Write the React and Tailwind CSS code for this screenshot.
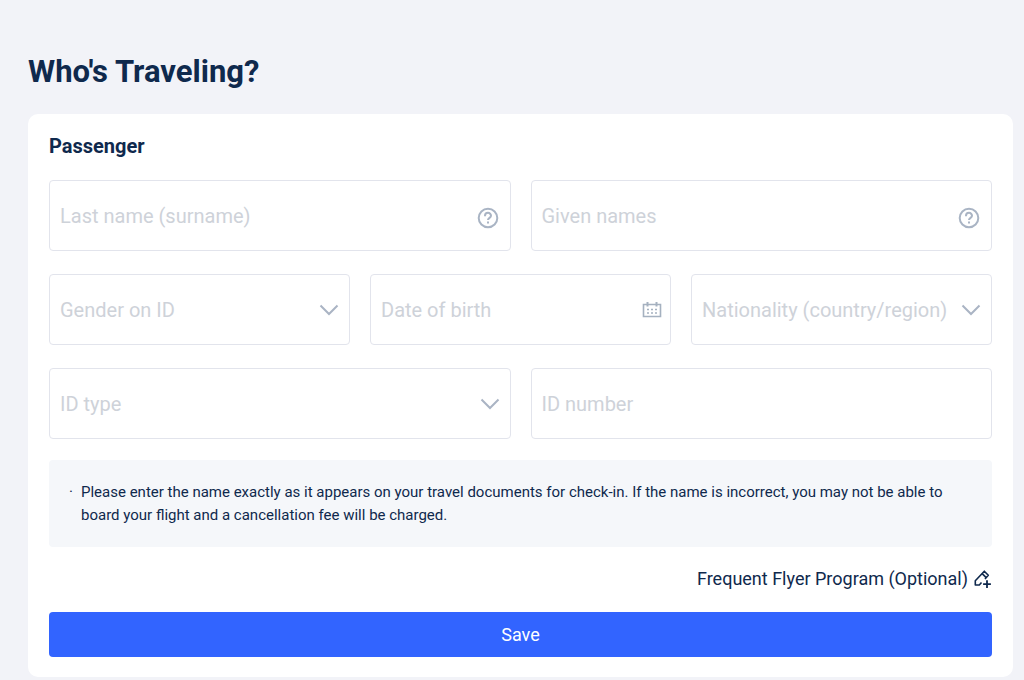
import { useState } from 'react';

function HelpIcon() {
  return (
    <svg viewBox="0 0 22 22" className="size-[22px]" fill="none" stroke="currentColor" strokeWidth="2" aria-hidden="true">
      <circle cx="11" cy="11" r="9.3" />
      <path d="M8 9.200V8.800a3 3 0 0 1 6 0c0 2-3 2.100-3 4.200" />
      <path d="M11 14.600v2" />
    </svg>
  );
}

function ChevronIcon() {
  return (
    <svg viewBox="0 0 20 12" className="h-3 w-5 shrink-0 pointer-events-none" fill="none" stroke="#aab4c4" strokeWidth="2" aria-hidden="true">
      <path d="M1.500 1.500 10 10l8.500-8.500" />
    </svg>
  );
}

function CalendarIcon() {
  return (
    <svg viewBox="0 0 20 18" className="h-[18px] w-5 shrink-0" fill="none" stroke="#a5b1c0" aria-hidden="true">
      <path d="M1.500 3.500h17v12h-17z" strokeWidth="1.6" />
      <path d="M5.500 1v4.500M14.500 1v4.500" strokeWidth="2" />
      <path d="M5 8.500h2M9 8.500h2M13 8.500h2M5 12h2M9 12h2M13 12h2" strokeWidth="1.6" />
    </svg>
  );
}

function EditPlusIcon() {
  return (
    <svg viewBox="0 0 18 20" className="h-5 w-[18px]" fill="none" stroke="currentColor" strokeWidth="1.6" strokeLinejoin="round" aria-hidden="true">
      <path d="M7.500 13.500 5.300 16H1.300v-4.200L10.300 2.200l4 4L11 10" />
      <path d="m8.200 4.600 4 4" />
      <path d="M13 11.200v7.800M9.100 15.100h7.800" strokeWidth="1.8" />
    </svg>
  );
}

function TextField({ name, label, value, onChange, help, calendar }) {
  return (
    <div className={`flex h-[71px] min-w-0 items-center rounded border border-[#e2e4ec] bg-white pl-[10px] focus-within:border-[#3264ff] ${calendar ? 'pr-2' : 'pr-[11px]'}`}>
      <input
        type="text"
        name={name}
        aria-label={label}
        placeholder={label}
        value={value}
        onChange={onChange}
        className="h-full w-0 min-w-0 flex-1 bg-transparent text-xl text-[#0f294d] outline-none placeholder:text-[#ced2d9]"
      />
      {help && (
        <button type="button" aria-label={`Help: ${label}`} className="mt-1 shrink-0 text-[#a9b4c4]">
          <HelpIcon />
        </button>
      )}
      {calendar && <CalendarIcon />}
    </div>
  );
}

function SelectField({ name, label, value, onChange, options }) {
  return (
    <div className="flex h-[71px] min-w-0 items-center rounded border border-[#e2e4ec] bg-white pl-[10px] pr-[10px] focus-within:border-[#3264ff]">
      <select
        name={name}
        aria-label={label}
        value={value}
        onChange={onChange}
        className={`h-full w-0 min-w-0 flex-1 appearance-none bg-transparent text-xl outline-none ${value ? 'text-[#0f294d]' : 'text-[#ced2d9]'}`}
      >
        <option value="" disabled>{label}</option>
        {options.map((o) => (
          <option key={o} value={o}>{o}</option>
        ))}
      </select>
      <ChevronIcon />
    </div>
  );
}

export default function App() {
  const [form, setForm] = useState({
    surname: '',
    givenNames: '',
    gender: '',
    birthDate: '',
    nationality: '',
    idType: '',
    idNumber: '',
  });

  function handleChange(e) {
    setForm((prev) => ({ ...prev, [e.target.name]: e.target.value }));
  }

  function handleSubmit(e) {
    e.preventDefault();
  }

  return (
    <main className="min-h-screen bg-[#f2f3f8] pt-[51px] pr-[11px] pb-[3px] pl-7 font-[Roboto,'Liberation_Sans',sans-serif] text-[#0f294d]">
      <h1 className="text-[31px] leading-[42px] font-bold">Who's Traveling?</h1>

      <form onSubmit={handleSubmit} className="mt-[21px] rounded-[10px] bg-white px-[21px] pt-[18px] pb-5">
        <h2 className="text-xl leading-7 font-bold">Passenger</h2>

        <div className="mt-5 space-y-[23px]">
          <div className="grid grid-cols-2 gap-5">
            <TextField name="surname" label="Last name (surname)" value={form.surname} onChange={handleChange} help />
            <TextField name="givenNames" label="Given names" value={form.givenNames} onChange={handleChange} help />
          </div>
          <div className="grid grid-cols-3 gap-5">
            <SelectField name="gender" label="Gender on ID" value={form.gender} onChange={handleChange} options={['Male', 'Female']} />
            <TextField name="birthDate" label="Date of birth" value={form.birthDate} onChange={handleChange} calendar />
            <SelectField name="nationality" label="Nationality (country/region)" value={form.nationality} onChange={handleChange} options={['China', 'Singapore', 'United Kingdom', 'United States']} />
          </div>
          <div className="grid grid-cols-2 gap-5">
            <SelectField name="idType" label="ID type" value={form.idType} onChange={handleChange} options={['Passport', 'ID card']} />
            <TextField name="idNumber" label="ID number" value={form.idNumber} onChange={handleChange} />
          </div>
        </div>

        <div className="mt-[21px] flex rounded bg-[#f5f7fa] px-5 pt-[21px] pb-5 text-[15px] leading-[23px]">
          <span className="w-3 shrink-0">·</span>
          <p>
            Please enter the name exactly as it appears on your travel documents for check-in. If the name is incorrect, you may not be able to board your flight and a cancellation fee will be charged.
          </p>
        </div>

        <div className="mt-[19px] flex justify-end">
          <button type="button" className="flex items-center gap-[6px] text-lg leading-[26px]">
            Frequent Flyer Program (Optional)
            <EditPlusIcon />
          </button>
        </div>

        <button type="submit" className="mt-5 h-[45px] w-full rounded bg-[#3264ff] text-lg text-white">
          Save
        </button>
      </form>
    </main>
  );
}
